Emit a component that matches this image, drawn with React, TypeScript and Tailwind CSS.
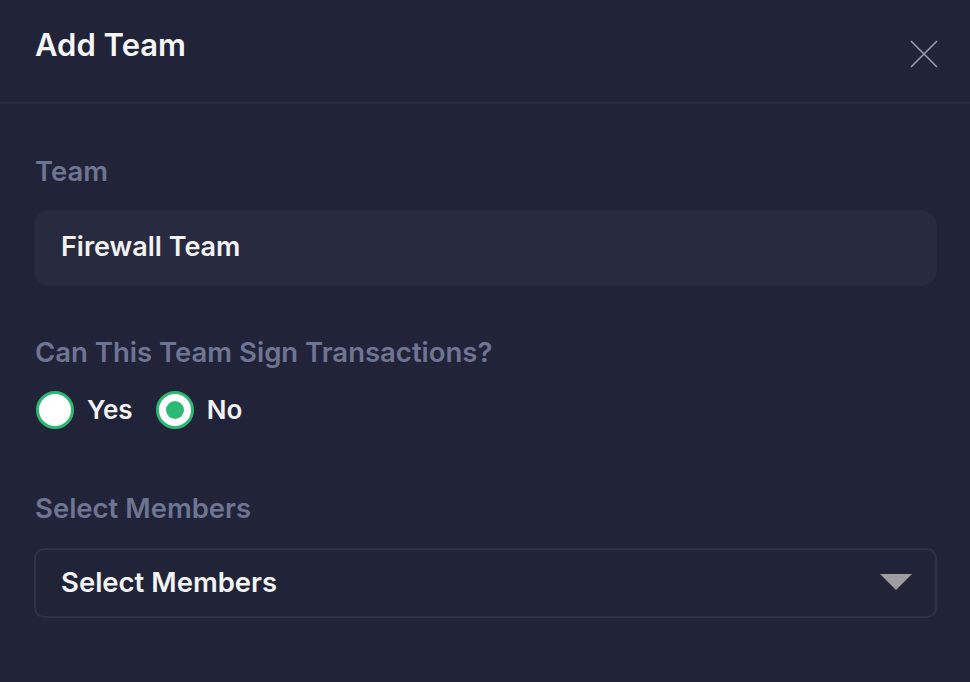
import React, { useState } from 'react';

const font = { fontFamily: '"Inter", "Noto Sans", sans-serif' };

function Radio({ checked, label, onClick }: { checked: boolean; label: string; onClick: () => void }) {
  return (
    <button type="button" onClick={onClick} className="flex items-center gap-[13px]">
      <span className="w-[38px] h-[38px] rounded-full bg-white border-[3px] border-[#2db974] flex items-center justify-center">
        {checked && <span className="w-[18px] h-[18px] rounded-full bg-[#2db974]" />}
      </span>
      <span className="text-[26px] font-semibold text-[#f3f3f3] leading-none">{label}</span>
    </button>
  );
}

export default function App() {
  const [canSign, setCanSign] = useState(false);

  return (
    <div className="w-[970px] h-[682px] bg-[#212338] overflow-hidden" style={font}>
      {/* header */}
      <div className="h-[104px] border-b-2 border-[#292b42] flex items-start justify-between pl-[35px] pr-[32px] pt-[29px]">
        <h2 className="text-[31px] font-semibold text-[#f5f5f5] leading-none">Add Team</h2>
        <button type="button" className="mt-[11px]">
          <svg width="28" height="28" viewBox="0 0 28 28" fill="none">
            <path d="M1 1L27 27M27 1L1 27" stroke="#9a9cab" strokeWidth="1.6" />
          </svg>
        </button>
      </div>

      <div className="pl-[34px] pr-[33px] pt-[54px]">
        <label className="block text-[27.5px] font-semibold text-[#6e7593] leading-none pl-px">Team</label>
        <div className="mt-[24px] h-[76px] rounded-[16px] bg-[#282a40] flex items-center px-[27px]">
          <span className="text-[27px] font-semibold text-[#f3f3f3]">Firewall Team</span>
        </div>

        <label className="block mt-[53px] text-[27.5px] font-semibold text-[#6e7593] leading-none pl-px">
          Can This Team Sign Transactions?
        </label>
        <div className="mt-[25px] flex items-center gap-[23px] pl-[2px]">
          <Radio checked={canSign} label="Yes" onClick={() => setCanSign(true)} />
          <Radio checked={!canSign} label="No" onClick={() => setCanSign(false)} />
        </div>

        <label className="block mt-[66px] text-[27.5px] font-semibold text-[#6e7593] leading-none pl-px">
          Select Members
        </label>
        <div className="mt-[25px] h-[70px] rounded-[10px] border-2 border-[#2f3148] flex items-center justify-between pl-[25px] pr-[23px]">
          <span className="text-[27.5px] font-semibold text-[#f3f3f3]">Select Members</span>
          <svg width="32" height="17" viewBox="0 0 32 17">
            <path d="M0 0H32L16 16Z" fill="#9e9e9e" />
          </svg>
        </div>
      </div>
    </div>
  );
}
